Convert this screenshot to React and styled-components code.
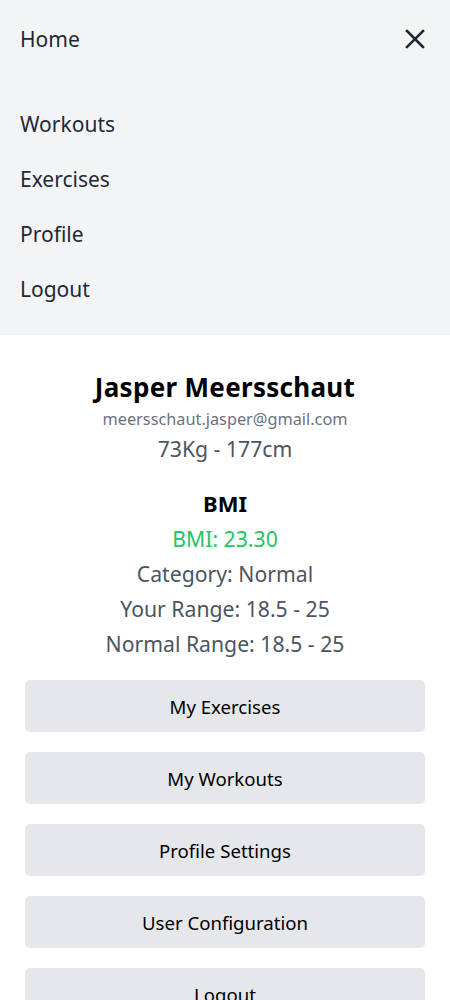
import React from "react";
import styled, { createGlobalStyle } from "styled-components";

const Global = createGlobalStyle`
  html, body { margin: 0; padding: 0; background: #ffffff; }
  body { font-family: "Noto Sans", "Open Sans", sans-serif; }
  * { box-sizing: border-box; }
`;

const Page = styled.div`
  width: 450px;
  min-height: 1000px;
  background: #ffffff;
`;

const Nav = styled.nav`
  background: #f3f4f6;
  padding-bottom: 18px;
`;

const NavHeader = styled.div`
  height: 78px;
  display: flex;
  align-items: center;
  justify-content: space-between;
  padding: 0 24px 0 20px;
`;

const NavLink = styled.a`
  display: block;
  font-size: 21px;
  color: #1f2937;
  text-decoration: none;
  line-height: ${(p) => (p.$block ? "55px" : "28px")};
`;

const CloseButton = styled.button`
  border: none;
  background: transparent;
  padding: 0;
  width: 22px;
  height: 22px;
  display: flex;
  align-items: center;
  justify-content: center;
  color: #1f2937;
`;

const Menu = styled.ul`
  list-style: none;
  margin: 0;
  padding: 19px 20px 0 20px;
`;

const Content = styled.main`
  display: flex;
  flex-direction: column;
  align-items: center;
  padding-top: 36px;
  text-align: center;
`;

const Name = styled.h1`
  margin: 0;
  font-size: 26px;
  letter-spacing: 0.3px;
  line-height: 32px;
  font-weight: 700;
  color: #000;
`;

const Email = styled.p`
  margin: 4px 0 0;
  font-size: 16.3px;
  line-height: 24px;
  color: #6b7280;
`;

const Stat = styled.p`
  margin: ${(p) => p.$mt || 0}px 0 0;
  font-size: 21.2px;
  line-height: 28px;
  color: ${(p) => p.$color || "#4b5563"};
`;

const BmiTitle = styled.h2`
  margin: 25px 0 0;
  font-size: 22px;
  line-height: 30px;
  font-weight: 700;
  color: #000;
`;

const Actions = styled.div`
  display: flex;
  flex-direction: column;
  gap: 20px;
  padding: 22px 25px 0;
  width: 100%;
`;

const ActionButton = styled.button`
  width: 100%;
  height: 52px;
  border: none;
  border-radius: 5px;
  background: #e5e7eb;
  color: #000;
  font-family: inherit;
  font-size: 18.6px;
  padding-top: 2px;
`;

const CloseIcon = () => (
  <svg width="20" height="20" viewBox="0 0 20 20" fill="none" stroke="currentColor" strokeWidth="2.6" strokeLinecap="square">
    <path d="M2 2 L18 18 M18 2 L2 18" />
  </svg>
);

const menuItems = ["Workouts", "Exercises", "Profile", "Logout"];
const actions = ["My Exercises", "My Workouts", "Profile Settings", "User Configuration", "Logout"];

export default function App() {
  return (
    <Page>
      <Global />
      <Nav>
        <NavHeader>
          <NavLink href="#">Home</NavLink>
          <CloseButton aria-label="Close menu">
            <CloseIcon />
          </CloseButton>
        </NavHeader>
        <Menu>
          {menuItems.map((item) => (
            <li key={item}>
              <NavLink $block href="#">{item}</NavLink>
            </li>
          ))}
        </Menu>
      </Nav>
      <Content>
        <Name>Jasper Meersschaut</Name>
        <Email>meersschaut.jasper@gmail.com</Email>
        <Stat $mt={4}>73Kg - 177cm</Stat>
        <BmiTitle>BMI</BmiTitle>
        <Stat $mt={7} $color="#22c55e">BMI: 23.30</Stat>
        <Stat $mt={7}>Category: Normal</Stat>
        <Stat $mt={7}>Your Range: 18.5 - 25</Stat>
        <Stat $mt={7}>Normal Range: 18.5 - 25</Stat>
        <Actions>
          {actions.map((a) => (
            <ActionButton key={a}>{a}</ActionButton>
          ))}
        </Actions>
      </Content>
    </Page>
  );
}
